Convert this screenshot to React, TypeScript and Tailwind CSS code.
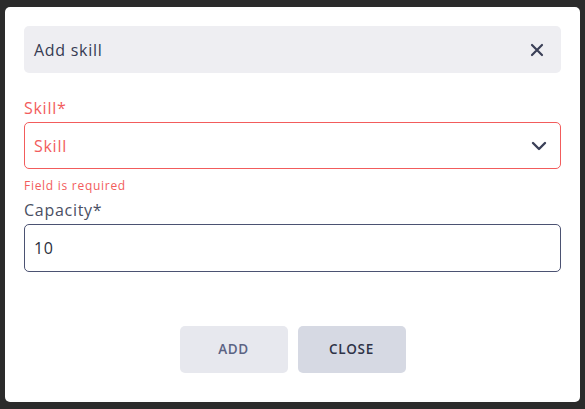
import React from "react";

export default function App() {
  return (
    <div
      className="w-[585px] h-[409px] bg-[#2b2b2b] pt-[7px] pl-[5px]"
      style={{ fontFamily: '"Open Sans", "Liberation Sans", sans-serif' }}
    >
      <div className="w-[575px] h-[395px] bg-white rounded-[5px] px-[19px] pt-[19px] flex flex-col tracking-[0.045em]">
        <div className="h-[47px] bg-[#eeeef2] rounded-[5px] flex items-center justify-between pl-[10px] pr-[17px]">
          <span className="text-[16px] text-[#363b52]">Add skill</span>
          <svg width="14" height="14" viewBox="0 0 14 14" fill="none">
            <path d="M2 2L12 12M12 2L2 12" stroke="#3b4058" strokeWidth="2.2" strokeLinecap="round" />
          </svg>
        </div>
        <div className="mt-[24px] text-[16px] leading-[22px] text-[#f25c5c]">Skill*</div>
        <div className="mt-[3px] h-[47px] border border-[#f25c5c] rounded-[5px] flex items-center justify-between pl-[9px] pr-[13px]">
          <span className="text-[16px] text-[#f25c5c]">Skill</span>
          <svg width="16" height="10" viewBox="0 0 16 10" fill="none">
            <path d="M2 2L8 8L14 2" stroke="#3b4058" strokeWidth="2.4" strokeLinecap="round" strokeLinejoin="round" />
          </svg>
        </div>
        <div className="mt-[9px] text-[12px] leading-[16px] text-[#f25c5c]">Field is required</div>
        <div className="mt-[5px] text-[16px] leading-[22px] text-[#4a4f63]">Capacity*</div>
        <div className="mt-[3px] h-[48px] border border-[#4b5272] rounded-[5px] flex items-center pl-[9px]">
          <span className="text-[16px] text-[#2b2f40]">10</span>
        </div>
        <div className="mt-[54px] flex justify-center gap-[10px]">
          <button className="w-[108px] h-[47px] rounded-[5px] bg-[#e7e8ee] text-[13.5px] font-semibold tracking-[0.05em] text-[#5b6383]">
            ADD
          </button>
          <button className="w-[108px] h-[47px] rounded-[5px] bg-[#d6d9e3] text-[13.5px] font-semibold tracking-[0.05em] text-[#2e3347]">
            CLOSE
          </button>
        </div>
      </div>
    </div>
  );
}
